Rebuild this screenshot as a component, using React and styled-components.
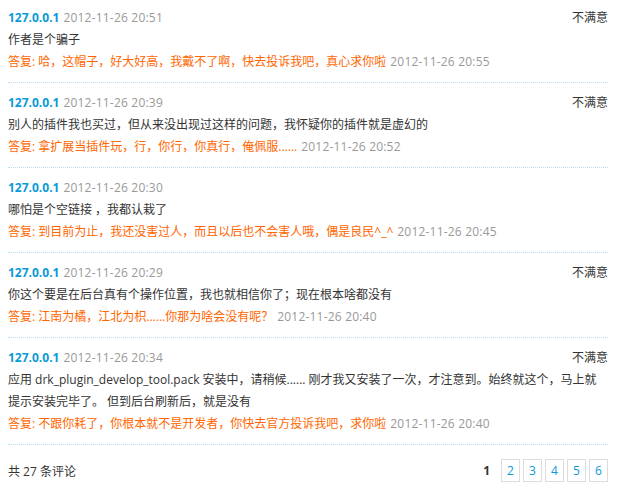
import React from "react";
import styled, { createGlobalStyle } from "styled-components";

const Global = createGlobalStyle`
  html, body { margin: 0; padding: 0; background: #fff; }
  body {
    font-family: "Open Sans", "Noto Sans CJK SC", sans-serif;
    font-size: 12px;
    color: #333;
  }
`;

const Wrap = styled.div`
  width: 600px;
  padding: 0 8px;
`;

const List = styled.ul`
  list-style: none;
  margin: 0;
  padding: 0;
`;

const Item = styled.li`
  padding: 8px 0 9px;
  border-bottom: 1px dotted #b9dcf1;
  &:first-child { padding-top: 6px; }
`;

const Head = styled.div`
  display: flex;
  align-items: center;
  line-height: 23px;
`;

const Ip = styled.span`
  color: #0a9ad6;
  font-weight: bold;
  margin-right: 4px;
`;

const Time = styled.span`
  color: #999;
  letter-spacing: 0.2px;
`;

const Mood = styled.span`
  margin-left: auto;
  color: #333;
`;

const Body = styled.div`
  line-height: 22px;
  color: #333;
`;

const Reply = styled.div`
  line-height: 22px;
  color: #ff6600;
  ${Time} { margin-left: 4px; }
`;

const Footer = styled.div`
  display: flex;
  align-items: center;
  justify-content: space-between;
  padding: 14px 0 17px;
`;

const Total = styled.span`
  color: #333;
`;

const Pager = styled.div`
  display: flex;
  align-items: center;
  gap: 3px;
`;

const Current = styled.span`
  font-weight: bold;
  color: #333;
  margin-right: 8px;
`;

const PageLink = styled.a`
  box-sizing: border-box;
  width: 19px;
  height: 23px;
  border: 1px solid #ddd;
  color: #0a9ad6;
  display: flex;
  align-items: center;
  justify-content: center;
  text-decoration: none;
`;

const comments = [
  {
    time: "2012-11-26 20:51",
    mood: "不满意",
    body: "作者是个骗子",
    reply: "哈，这帽子，好大好高，我戴不了啊，快去投诉我吧，真心求你啦",
    rtime: "2012-11-26 20:55",
  },
  {
    time: "2012-11-26 20:39",
    mood: "不满意",
    body: "别人的插件我也买过，但从来没出现过这样的问题，我怀疑你的插件就是虚幻的",
    reply: "拿扩展当插件玩，行，你行，你真行，俺佩服......",
    rtime: "2012-11-26 20:52",
  },
  {
    time: "2012-11-26 20:30",
    mood: "",
    body: "哪怕是个空链接 ，我都认栽了",
    reply: "到目前为止，我还没害过人，而且以后也不会害人哦，偶是良民^_^",
    rtime: "2012-11-26 20:45",
  },
  {
    time: "2012-11-26 20:29",
    mood: "不满意",
    body: "你这个要是在后台真有个操作位置，我也就相信你了；现在根本啥都没有",
    reply: "江南为橘，江北为枳......你那为啥会没有呢？",
    rtime: "2012-11-26 20:40",
  },
  {
    time: "2012-11-26 20:34",
    mood: "不满意",
    body: "应用 drk_plugin_develop_tool.pack 安装中，请稍候...... 刚才我又安装了一次，才注意到。始终就这个，马上就提示安装完毕了。 但到后台刷新后，就是没有",
    reply: "不跟你耗了，你根本就不是开发者，你快去官方投诉我吧，求你啦",
    rtime: "2012-11-26 20:40",
  },
];

export default function App() {
  return (
    <Wrap>
      <Global />
      <List>
        {comments.map((c, i) => (
          <Item key={i}>
            <Head>
              <Ip>127.0.0.1</Ip>
              <Time>{c.time}</Time>
              {c.mood && <Mood>{c.mood}</Mood>}
            </Head>
            <Body>{c.body}</Body>
            <Reply>
              答复: {c.reply}
              <Time>{c.rtime}</Time>
            </Reply>
          </Item>
        ))}
      </List>
      <Footer>
        <Total>共 27 条评论</Total>
        <Pager>
          <Current>1</Current>
          {[2, 3, 4, 5, 6].map((n) => (
            <PageLink key={n} href="#">{n}</PageLink>
          ))}
        </Pager>
      </Footer>
    </Wrap>
  );
}
